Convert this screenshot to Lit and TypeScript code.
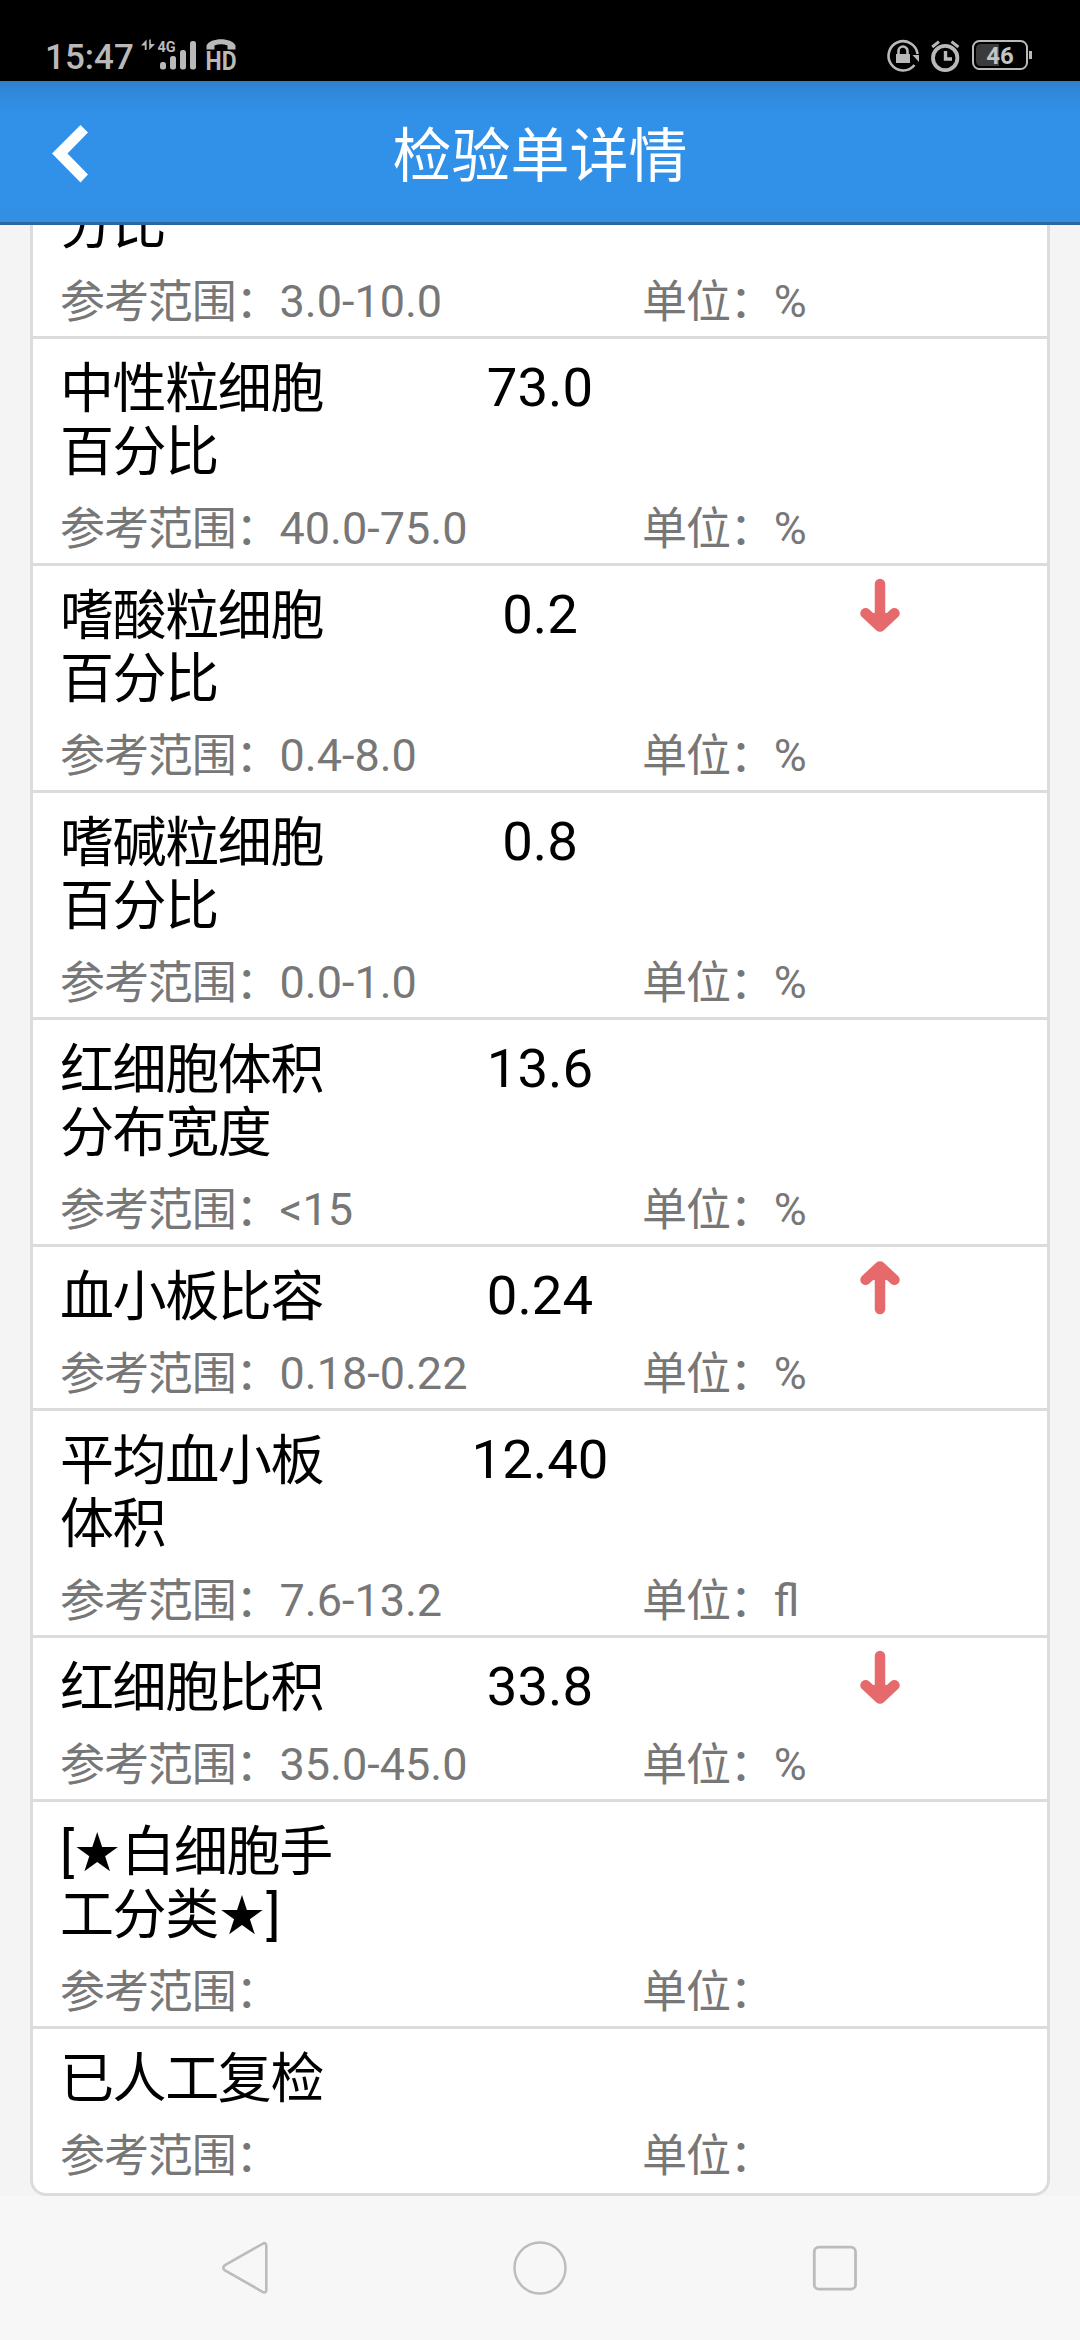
import { LitElement, html, css, svg, nothing } from "lit";
import { customElement, property } from "lit/decorators.js";

type Trend = "up" | "down" | "";

interface LabItem {
  name: string[];
  value: string;
  range: string;
  unit: string;
  trend: Trend;
}

const item = (name: string[], value: string, range: string, unit: string, trend: Trend = ""): LabItem => ({
  name,
  value,
  range,
  unit,
  trend,
});

const ITEMS: LabItem[] = [
  item(["分比"], "", "3.0-10.0", "%"),
  item(["中性粒细胞", "百分比"], "73.0", "40.0-75.0", "%"),
  item(["嗜酸粒细胞", "百分比"], "0.2", "0.4-8.0", "%", "down"),
  item(["嗜碱粒细胞", "百分比"], "0.8", "0.0-1.0", "%"),
  item(["红细胞体积", "分布宽度"], "13.6", "<15", "%"),
  item(["血小板比容"], "0.24", "0.18-0.22", "%", "up"),
  item(["平均血小板", "体积"], "12.40", "7.6-13.2", "fl"),
  item(["红细胞比积"], "33.8", "35.0-45.0", "%", "down"),
  item(["[★白细胞手", "工分类★]"], "", "", ""),
  item(["已人工复检"], "", "", ""),
];

@customElement("status-bar")
export class StatusBar extends LitElement {
  static styles = css`
    :host {
      display: flex;
      height: 81px;
      box-sizing: border-box;
      padding: 39px 47px 0 45px;
      justify-content: space-between;
      background: #000;
      color: #b9b9b9;
      font-family: Roboto, sans-serif;
    }
    .group {
      display: flex;
      align-items: flex-start;
    }
    .time {
      font-size: 35px;
      font-weight: 500;
      line-height: 38px;
      width: 96px;
      white-space: nowrap;
    }
    .signal {
      margin-right: 9px;
    }
    .lock {
      margin-right: 11px;
    }
    .alarm {
      margin-right: 12px;
    }
    svg {
      display: block;
      overflow: visible;
    }
    text {
      font-family: Roboto, sans-serif;
      font-weight: 700;
    }
  `;

  render() {
    return html`
      <div class="group">
        <span class="time">15:47</span>
        <svg class="signal" width="56" height="32" viewBox="0 0 56 32" fill="#b9b9b9">
          <path d="M5.6 0.5V11H3.8V6.5H0ZM8.2 0.5V11L14 5H9.8V0.5Z" />
          <text x="16.5" y="12.5" font-size="14.5">4G</text>
          <rect x="19" y="23" width="6" height="7.5" rx="2.5" />
          <rect x="29" y="17" width="6" height="13.5" rx="2.5" />
          <rect x="39" y="11" width="6" height="19.5" rx="2.5" />
          <rect x="49" y="2" width="6" height="28.5" rx="2.5" />
        </svg>
        <svg width="31" height="33" viewBox="0 0 31 33" fill="#b9b9b9">
          <path d="M0.5 10.5V6.5C4-2 26-2 29.5 6.5V10.5H21.5V6.6Q15 4 8.5 6.6V10.5Z" />
          <text x="-0.5" y="31" font-size="26" textLength="31" lengthAdjust="spacingAndGlyphs">HD</text>
        </svg>
      </div>
      <div class="group">
        <svg class="lock" width="33" height="33" viewBox="0 0 33 33" fill="none" stroke="#b9b9b9">
          <path d="M30.6 15A14.6 14.6 0 1 0 27.5 26" stroke-width="2.6" />
          <path d="M25.5 16H32V23Z" fill="#b9b9b9" stroke="none" />
          <rect x="9" y="15" width="14" height="9" fill="#b9b9b9" stroke="none" />
          <path d="M11.5 16V12a4.5 4.5 0 0 1 9 0v4" stroke-width="2.6" />
        </svg>
        <svg class="alarm" width="29" height="33" viewBox="0 0 29 33" fill="none" stroke="#b9b9b9">
          <circle cx="14.2" cy="19" r="12.2" stroke-width="3.8" />
          <path d="M14.5 12V20H21" stroke-width="3.4" />
          <path d="M1.2 8L8 2.6M20.5 2.6L27.4 8" stroke-width="3" />
        </svg>
        <svg width="61" height="33" viewBox="0 0 61 33">
          <rect x="1" y="2" width="54" height="28" rx="6.5" fill="none" stroke="#b9b9b9" stroke-width="2" />
          <path d="M9 5H27V27H9Q4 27 4 22V10Q4 5 9 5Z" fill="#3b3b3b" />
          <rect x="57" y="12" width="3" height="8" fill="#b9b9b9" />
          <text x="28" y="24.6" font-size="24" text-anchor="middle" fill="#c4c4c4">46</text>
        </svg>
      </div>
    `;
  }
}

@customElement("title-bar")
export class TitleBar extends LitElement {
  static styles = css`
    :host {
      display: grid;
      grid-template-columns: 140px 1fr 140px;
      align-items: center;
      height: 144px;
      box-sizing: border-box;
      border-bottom: 3px solid #2a679f;
      background: linear-gradient(#2f7fc8 0, #3087d8 9px, #318de3 24px, #3190e8 32px, #3190e8 126px, #338fdf 136px, #3190e8 141px);
      color: #fff;
      font-family: Roboto, "Noto Sans CJK SC", sans-serif;
    }
    .back {
      display: block;
      margin: 5px 0 0 50px;
    }
    .title {
      margin: 11px 0 0;
      text-align: center;
      font-size: 59px;
      font-weight: 400;
      line-height: 90px;
    }
  `;

  render() {
    return html`
      <svg class="back" width="40" height="60" viewBox="0 0 40 60" fill="#fff">
        <path d="M30.5 1L38 8.5L17.5 29.5L38 50.5L30.5 58.5L2 29.5Z" />
      </svg>
      <h1 class="title">检验单详情</h1>
    `;
  }
}

@customElement("lab-row")
export class LabRow extends LitElement {
  @property({ attribute: false }) item!: LabItem;

  static styles = css`
    :host {
      display: block;
      padding: 17px 27px 0 27px;
      font-family: Roboto, "Noto Sans CJK SC", sans-serif;
    }
    .main {
      display: grid;
      grid-template-columns: 320px 320px 1fr;
      color: #000;
    }
    .name {
      padding-top: 2px;
      font-size: 54px;
      letter-spacing: -1.4px;
      line-height: 63px;
      white-space: nowrap;
    }
    .line {
      display: block;
      height: 63px;
    }
    .star {
      font-family: "DejaVu Sans", sans-serif;
      letter-spacing: 0;
    }
    .value {
      font-size: 54.5px;
      line-height: 63px;
      text-align: center;
    }
    .trend {
      display: block;
      margin: -5px 0 0 159px;
    }
    .trend.up {
      transform: rotate(180deg);
    }
    .meta {
      display: grid;
      grid-template-columns: 582px 1fr;
      margin-top: 15px;
      height: 64px;
      line-height: 60px;
      font-size: 45px;
      color: #777;
    }
    .label {
      letter-spacing: -1.1px;
      vertical-align: -1px;
    }
  `;

  private line(text: string) {
    return text
      .split(/(★)/)
      .filter(Boolean)
      .map((part) => (part === "★" ? html`<span class="star">★</span>` : part));
  }

  private arrow(trend: Trend) {
    if (!trend) return nothing;
    return html`<svg class="trend ${trend}" width="42" height="56" viewBox="0 0 42 56">
      ${svg`<path d="M21 6V46M6.5 35.2L21 48.6L35.5 35.2" fill="none" stroke="#e66a6c" stroke-width="10.5" stroke-linecap="round" stroke-linejoin="round"/>`}
      ${svg`<path d="M12 35H30L21 45Z" fill="#e66a6c"/>`}
    </svg>`;
  }

  render() {
    const { name, value, range, unit, trend } = this.item;
    return html`
      <div class="main">
        <div class="name">${name.map((l) => html`<span class="line">${this.line(l)}</span>`)}</div>
        <div class="value">${value}</div>
        <div>${this.arrow(trend)}</div>
      </div>
      <div class="meta">
        <div><span class="label">参考范围：</span>${range}</div>
        <div><span class="label">单位：</span>${unit}</div>
      </div>
    `;
  }
}

@customElement("nav-bar")
export class NavBar extends LitElement {
  static styles = css`
    :host {
      display: grid;
      grid-template-columns: 1fr 1fr 1fr;
      align-items: center;
      justify-items: center;
      height: 144px;
      padding: 0 98px;
      box-sizing: border-box;
      background: #f7f7f7;
    }
    svg {
      display: block;
    }
  `;

  render() {
    return html`
      <svg width="56" height="56" viewBox="0 0 56 56" fill="none" stroke="#bcbcbc" stroke-width="2.6">
        <path d="M45.5 3.8Q49.3 1.8 49.3 6V49.5Q49.3 53.8 45.5 51.8L8 30.5Q4.5 27.8 8 25.1Z" />
      </svg>
      <svg width="56" height="56" viewBox="0 0 56 56" fill="none" stroke="#bcbcbc" stroke-width="2.4">
        <circle cx="28" cy="28" r="25.5" />
      </svg>
      <svg width="56" height="56" viewBox="0 0 56 56" fill="none" stroke="#bcbcbc" stroke-width="2.8">
        <rect x="7.3" y="7.2" width="41.2" height="42" rx="4.5" />
      </svg>
    `;
  }
}

@customElement("app-root")
export class AppRoot extends LitElement {
  static styles = css`
    :host {
      display: flex;
      flex-direction: column;
      width: 1080px;
      height: 2340px;
      overflow: hidden;
      background: #f4f4f4;
    }
    .scroll {
      flex: 1;
      min-height: 0;
      overflow: hidden;
      display: flex;
      flex-direction: column;
      justify-content: flex-end;
      padding: 0 30px;
    }
    .card {
      border: 3px solid #dcdcdc;
      border-radius: 16px;
      background: #fff;
      padding-bottom: 3px;
    }
    .row + .row {
      border-top: 3px solid #dcdcdc;
    }
  `;

  render() {
    return html`
      <status-bar></status-bar>
      <title-bar></title-bar>
      <main class="scroll">
        <div class="card">${ITEMS.map((i) => html`<lab-row class="row" .item=${i}></lab-row>`)}</div>
      </main>
      <nav-bar></nav-bar>
    `;
  }
}
